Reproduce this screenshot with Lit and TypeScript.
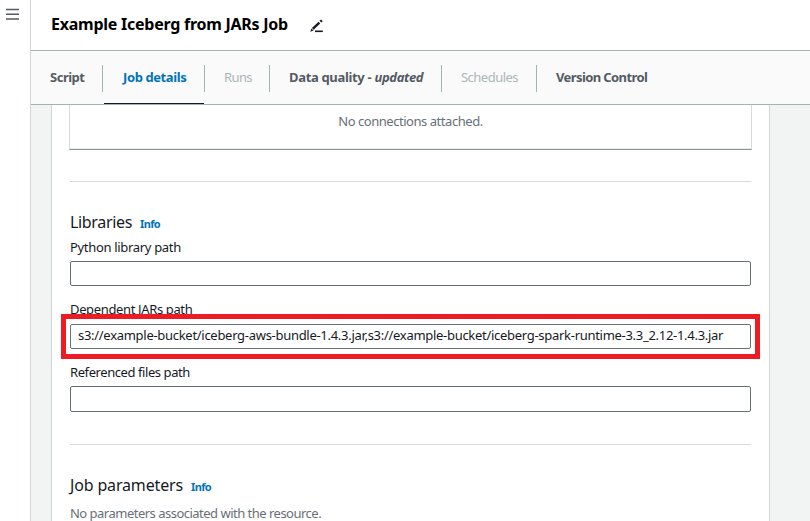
import { LitElement, html, css, nothing } from "lit";

const tabs = [
  { id: "script", label: "Script" },
  { id: "details", label: "Job details", active: true },
  { id: "runs", label: "Runs", disabled: true },
  { id: "quality", label: "Data quality - ", tag: "updated" },
  { id: "schedules", label: "Schedules", disabled: true },
  { id: "version", label: "Version Control" },
];

const libraries = [
  { id: "python", label: "Python library path", value: "" },
  {
    id: "jars",
    label: "Dependent JARs path",
    value:
      "s3://example-bucket/iceberg-aws-bundle-1.4.3.jar,s3://example-bucket/iceberg-spark-runtime-3.3_2.12-1.4.3.jar",
    marked: true,
  },
  { id: "files", label: "Referenced files path", value: "" },
];

class AppRoot extends LitElement {
  static styles = css`
    * { box-sizing: border-box; }
    :host {
      display: flex;
      width: 100%;
      height: 521px;
      overflow: hidden;
      background: #fff;
      color: #16191f;
      font: 13px/20px "Noto Sans", sans-serif;
      white-space: nowrap;
    }
    .rail { width: 30px; flex: none; padding: 8px 0 0 6px; }
    svg { display: block; }
    .main {
      flex: 1;
      min-width: 0;
      display: flex;
      flex-direction: column;
      border-left: 1px solid #d0d5d5;
    }
    header {
      height: 51px;
      flex: none;
      display: flex;
      align-items: center;
      gap: 22px;
      padding: 0 0 2px 20px;
      border-bottom: 1px solid #a2b5b5;
    }
    .edit { margin-top: 4px; }
    h1 { margin: 0; font-size: 16px; line-height: 24px; letter-spacing: -0.25px; color: #000; }
    nav {
      height: 54px;
      flex: none;
      display: flex;
      background: #fafafa;
      border-bottom: 1px solid #a2b5b5;
    }
    .tab {
      position: relative;
      display: flex;
      align-items: center;
      padding: 0 0 1px 20px;
      color: #545b64;
      font-weight: 700;
      white-space: pre;
    }
    .tab + .tab::before {
      content: "";
      position: absolute;
      left: 0;
      top: 14px;
      height: 27px;
      width: 1px;
      background: #a2b5b5;
    }
    .script { width: 71px; letter-spacing: -0.49px; padding-left: 19px; }
    .details { width: 102px; letter-spacing: -0.4px; padding-left: 21px; }
    .runs { width: 65px; letter-spacing: -0.6px; }
    .quality { width: 172px; letter-spacing: -0.33px; }
    .quality em { letter-spacing: -0.35px; }
    .schedules { width: 95px; letter-spacing: -0.52px; }
    .version { letter-spacing: -0.6px; }
    .active { color: #0073bb; }
    .active::after {
      content: "";
      position: absolute;
      left: 2px;
      right: 0;
      bottom: 0;
      height: 1px;
      background: #16191f;
    }
    .disabled { color: #aab7b8; font-weight: 400; }
    .page {
      flex: 1;
      min-height: 0;
      display: flex;
      padding: 0 40px 0 20px;
      background: #f2f3f3;
    }
    .card {
      flex: 1;
      min-width: 0;
      padding: 0 18px;
      background: #fff;
      border: solid #d0d5d5;
      border-width: 0 1px;
    }
    .empty {
      height: 45px;
      margin: 0 -1px;
      padding-top: 6px;
      text-align: center;
      color: #687078;
      letter-spacing: -0.46px;
      border: 1px solid #d5dbdb;
      border-top: 0;
      border-bottom-color: #879596;
      box-shadow: inset 0 -1px #eaeded;
    }
    hr { height: 1px; margin: 0; border: 0; background: #d5dbdb; }
    .first { margin-top: 31px; }
    .heading { display: flex; align-items: baseline; gap: 8px; height: 24px; margin-top: 28px; }
    h2 { margin: 0; font-size: 16px; line-height: 24px; font-weight: 400; letter-spacing: -0.34px; }
    .params h2 { letter-spacing: -0.16px; }
    a { font-size: 11px; font-weight: 700; color: #0073bb; letter-spacing: -0.6px; }
    .fields { height: 210px; }
    .field { height: 63px; padding-top: 3px; }
    .field.marked { height: 62px; }
    label { display: block; height: 24px; letter-spacing: -0.32px; }
    .marked label { line-height: 19px; letter-spacing: -0.36px; }
    .files label { letter-spacing: -0.42px; }
    .box {
      position: relative;
      height: 25px;
      padding: 0 7px;
      line-height: 21px;
      letter-spacing: -0.29px;
      border: 1px solid #687078;
      border-radius: 2px;
    }
    .files .box { height: 26px; }
    .marked .box::after {
      content: "";
      position: absolute;
      inset: -11px -10px;
      border: 5px solid #ed1c24;
    }
    .note { margin: 6px 0 0; color: #687078; letter-spacing: -0.51px; }
  `;

  render() {
    return html`
      <div class="rail">
        <svg width="13" height="13" viewBox="0 0 13 13" stroke="#545b64" stroke-width="1.6">
          <path d="M0 1.5h13M0 6.2h13M0 11h13" />
        </svg>
      </div>
      <div class="main">
        <header>
          <h1>Example Iceberg from JARs Job</h1>
          <svg class="edit" width="15" height="16" viewBox="0 0 15 16">
            <path d="M2.8 10.9 9.4 4.6" stroke="#16191f" stroke-width="2.4" />
            <path d="M10.4 3.7 11.9 2.3" stroke="#16191f" stroke-width="2.4" />
            <path d="M1.4 10.6 3.6 12.6 .3 13.8z" fill="#16191f" />
            <path d="M5 13.3H12.8" stroke="#16191f" stroke-width="1.6" />
          </svg>
        </header>
        <nav>
          ${tabs.map(
            (t) => html`<div class="tab ${t.id} ${t.active ? "active" : ""} ${t.disabled ? "disabled" : ""}"
              ><span>${t.label}${t.tag ? html`<em>${t.tag}</em>` : nothing}</span></div>`
          )}
        </nav>
        <div class="page">
          <div class="card">
            <div class="empty">No connections attached.</div>
            <hr class="first" />
            <div class="heading"><h2>Libraries</h2><a>Info</a></div>
            <div class="fields">
              ${libraries.map(
                (f) => html`<div class="field ${f.id} ${f.marked ? "marked" : ""}">
                  <label>${f.label}</label>
                  <div class="box">${f.value}</div>
                </div>`
              )}
            </div>
            <hr />
            <div class="heading params"><h2>Job parameters</h2><a>Info</a></div>
            <p class="note">No parameters associated with the resource.</p>
          </div>
        </div>
      </div>
    `;
  }
}
customElements.define("app-root", AppRoot);
